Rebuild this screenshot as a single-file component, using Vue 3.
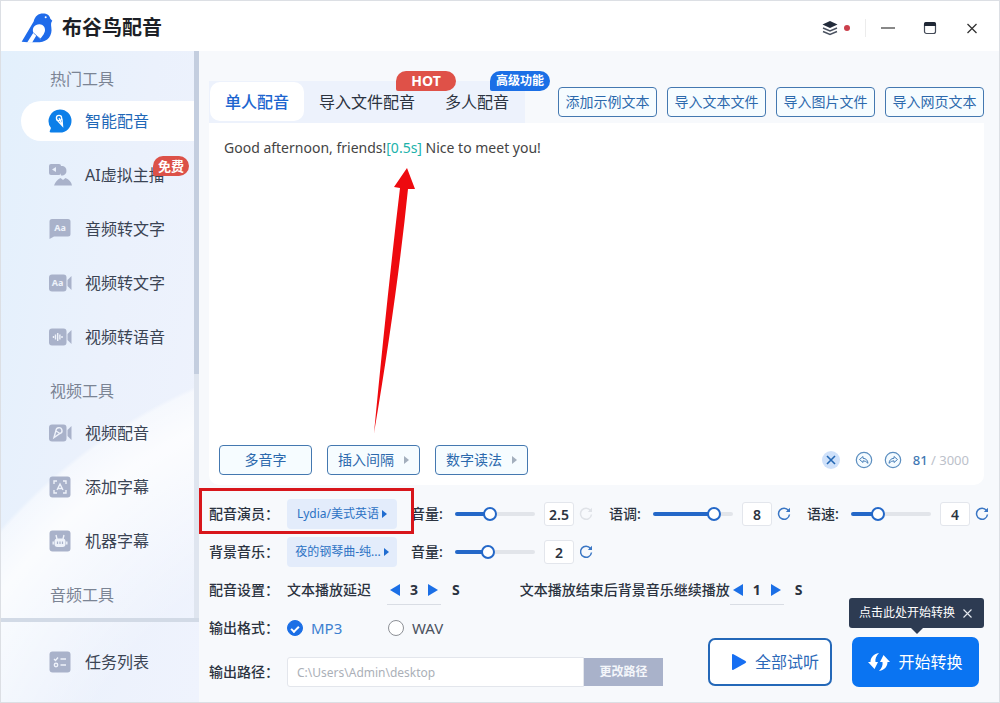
<template>
  <div class="app-window">
    <header class="title-bar">
      <div class="brand">
        <svg class="brand-logo" viewBox="0 0 96 92" aria-hidden="true">
          <path
            d="M2 89 L38 28 C42 12 52 4 66 4 C78 4 86 9 88 20 L94 26 C89 32 90 38 91 46 C95 70 80 89 56 90 L20 90 Z"
            fill="#1f6bea"
          />
          <path d="M18 92 L37 62 C32 47 41 36 55 36 C69 36 76 50 70 62 C67 69 63 74 58 79 L46 70 L33 92 Z" fill="#fff" />
          <path d="M37 62 L60 82" stroke="#5b93ee" stroke-width="3" />
          <circle cx="74" cy="15" r="3" fill="#fff" />
        </svg>
        <h1 class="brand-name">布谷鸟配音</h1>
      </div>
      <div class="window-tools">
        <button class="tool-button skin" aria-label="皮肤">
          <svg width="16" height="16" viewBox="0 0 16 16">
            <path d="M8 1 L15.5 4.5 L8 8 L0.5 4.5 Z" fill="#222b3a" />
            <path d="M1 8 L8 11 L15 8 M1 11.5 L8 14.5 L15 11.5" fill="none" stroke="#4a5260" stroke-width="1.4" />
          </svg>
          <span class="skin-dot"></span>
        </button>
        <span class="divider"></span>
        <button class="tool-button" aria-label="最小化">
          <svg width="14" height="14" viewBox="0 0 14 14">
            <path d="M0 7 H14" stroke="#555" stroke-width="1.4" />
          </svg>
        </button>
        <button class="tool-button" aria-label="最大化">
          <svg width="14" height="14" viewBox="0 0 14 14">
            <rect x="1.5" y="1.5" width="11" height="11" rx="2" fill="none" stroke="#444b58" stroke-width="1.2" />
            <path d="M1 5 V3 Q1 1 3 1 H11 Q13 1 13 3 V5 Z" fill="#1f2735" />
          </svg>
        </button>
        <button class="tool-button" aria-label="关闭">
          <svg width="14" height="14" viewBox="0 0 14 14">
            <path d="M2.5 3 L11.5 12 M11.5 3 L2.5 12" stroke="#333" stroke-width="1.3" />
          </svg>
        </button>
      </div>
    </header>

    <div class="body">
      <aside class="sidebar">
        <div class="sidebar-scroll">
          <nav class="menu">
            <section v-for="group in menuGroups" :key="group.title" class="menu-group">
              <h2 class="menu-title">{{ group.title }}</h2>
              <a
                v-for="item in group.items"
                :key="item.name"
                href="#"
                :class="['menu-item', { active: item.name === activeMenu }]"
                @click.prevent="activeMenu = item.name"
              >
                <svg class="menu-icon" viewBox="0 0 24 24" aria-hidden="true">
                  <template v-if="item.icon === 'mic'">
                    <path d="M12 0.5 A11.5 11.5 0 1 1 12 23.5 H3 Q1 23.5 2 21.5 L3 19 A11.5 11.5 0 0 1 12 0.5 Z" fill="#0c7fe9" />
                    <circle cx="11" cy="9" r="2.6" fill="none" stroke="#fff" stroke-width="1.3" />
                    <path d="M8.8 10.8 L14.6 17 L14 9.6 M11 9 L14.6 17" fill="none" stroke="#fff" stroke-width="1.2" />
                  </template>
                  <template v-else-if="item.icon === 'anchor'">
                    <rect x="1" y="1" width="12" height="11" rx="2" />
                    <path d="M13 3 H15 A5 5 0 0 1 15 12.5 H13 Z" />
                    <path d="M6 22.5 Q8 17 12.5 15 L15 17 L17.5 15 Q23 17 24 22.5 Z" />
                    <path d="M4 6.5 L8 4 V9 Z" fill="#e8effa" />
                  </template>
                  <template v-else-if="item.icon === 'audio-text'">
                    <path d="M4 2 H20 Q22.5 2 22.5 4.5 V17 Q22.5 19.5 20 19.5 H6 L1.5 22 V4.5 Q1.5 2 4 2 Z" />
                    <text x="12" y="13.5" class="icon-text">Aa</text>
                  </template>
                  <template v-else-if="item.icon.startsWith('video')">
                    <rect x="1" y="3.5" width="17.5" height="17" rx="3" />
                    <path d="M19.5 9 L23.5 5 V19 L19.5 15 Z" />
                    <text v-if="item.icon === 'video-text'" x="9.5" y="15" class="icon-text">Aa</text>
                    <path
                      v-else-if="item.icon === 'video-wave'"
                      d="M5.5 11 V13 M7.5 9.5 V14.5 M9.7 8 V16 M11.9 9.5 V14.5 M14 11 V13"
                      class="icon-line"
                    />
                    <path v-else d="M6 16.5 L8 9.5 A3 3 0 1 1 12 12.5 Z M8 10 L12 12.5" class="icon-line" />
                  </template>
                  <template v-else>
                    <rect x="1.5" y="1.5" width="21" height="21" rx="3" />
                    <path
                      v-if="item.icon === 'caption'"
                      d="M6 9 V6 H9 M15 6 H18 V9 M18 15 V18 H15 M9 18 H6 V15 M9 15 L12 9 L15 15 M10 13.5 H14"
                      class="icon-line"
                    />
                    <template v-else>
                      <rect x="6.5" y="9.500" width="11" height="8.500" rx="3" fill="#eef2fa" />
                      <path d="M9 10 L8 6 M15 10 L16 6 M5.2 12.500 V15.500 M18.800 12.500 V15.500" class="icon-line" />
                      <path d="M9.5 12.500 V15 M12 12.500 V15 M14.5 12.500 V15" stroke="#a9b2ca" stroke-width="1.2" />
                    </template>
                  </template>
                </svg>
                <span>{{ item.name }}</span>
                <span v-if="item.badge" class="free-badge">{{ item.badge }}</span>
              </a>
            </section>
          </nav>
          <div class="scroll-track"><div class="scroll-thumb"></div></div>
        </div>
        <div class="sidebar-footer">
          <a href="#" class="menu-item">
            <svg class="menu-icon" viewBox="0 0 24 24" aria-hidden="true">
              <rect x="1.5" y="1.5" width="21" height="21" rx="3" />
              <path d="M6 9 L7.5 10.5 L10 7.5 M12.5 9 H18 M12.5 15 H18" class="icon-line" />
              <circle cx="8" cy="15" r="1.7" class="icon-line" />
            </svg>
            <span>任务列表</span>
          </a>
        </div>
      </aside>

      <main class="main">
        <div class="top-row">
          <div class="tabs" role="tablist">
            <button
              v-for="tab in tabs"
              :key="tab.name"
              role="tab"
              :class="['tab', { active: tab.name === activeTab }]"
              @click="activeTab = tab.name"
            >
              {{ tab.name }}
              <span v-if="tab.badge" :class="['tab-badge', tab.badgeType]">{{ tab.badge }}</span>
            </button>
          </div>
          <div class="import-buttons">
            <button v-for="name in importActions" :key="name" class="outline-button import-button">{{ name }}</button>
          </div>
        </div>

        <section class="editor">
          <div class="editor-text" contenteditable="true" role="textbox" aria-label="配音文本">Good afternoon, friends!<span class="pause">[0.5s]</span> Nice to meet you!</div>
          <svg class="pointer-arrow" viewBox="0 0 40 270" aria-hidden="true">
            <path d="M34 1 L42 22 L35 22 Q24 130 1 266 Q14 130 27 21 L21 20 Z" fill="#ee0a0f" />
          </svg>
          <div class="editor-footer">
            <button class="outline-button word-button">多音字</button>
            <button class="outline-button word-button">插入间隔<i class="mini-arrow"></i></button>
            <button class="outline-button word-button">数字读法<i class="mini-arrow"></i></button>
            <div class="editor-tools">
              <button class="round-button" aria-label="清空">
                <svg width="18" height="18" viewBox="0 0 18 18">
                  <circle cx="9" cy="9" r="9" fill="#cfe1fa" />
                  <path d="M5 5 L13 13 M13 5 L5 13" stroke="#2468b4" stroke-width="1.6" />
                </svg>
              </button>
              <button class="round-button undo" aria-label="撤销">
                <svg width="18" height="18" viewBox="0 0 18 18">
                  <circle cx="9" cy="9" r="7.7" fill="#f4fbff" stroke="#5d8fc0" stroke-width="1.2" />
                  <path d="M4.5 8.5 L8 5.5 V7.3 Q12.5 7.5 13 12.3 Q11 9.8 8 9.8 V11.5 Z" fill="none" stroke="#4a80b8" />
                </svg>
              </button>
              <button class="round-button" aria-label="重做">
                <svg width="18" height="18" viewBox="0 0 18 18">
                  <circle cx="9" cy="9" r="7.7" fill="#f4fbff" stroke="#5d8fc0" stroke-width="1.2" />
                  <path d="M13.5 8.5 L10 5.5 V7.3 Q5.5 7.5 5 12.3 Q7 9.8 10 9.8 V11.5 Z" fill="none" stroke="#4a80b8" />
                </svg>
              </button>
              <span class="counter"><b>81</b> / 3000</span>
            </div>
          </div>
        </section>

        <section class="settings">
          <div v-for="row in voiceRows" :key="row.label" class="setting-row">
            <div :class="['voice-field', { marked: row.marked }]">
              <span class="row-label">{{ row.label }}</span>
              <button class="voice-select">{{ row.value }}<i class="select-arrow"></i></button>
            </div>
            <div class="sliders">
              <div v-for="slider in row.sliders" :key="slider.id" class="slider-group">
                <label :for="slider.id" class="slider-label">{{ slider.label }}</label>
                <input
                  :id="slider.id"
                  v-model.number="slider.percent"
                  type="range"
                  min="0"
                  max="100"
                  class="slider"
                  :style="{ '--fill': slider.percent + '%' }"
                />
                <input class="slider-value" type="text" :value="slider.value" :aria-label="slider.label + '数值'" />
                <button :class="['reset-button', { muted: slider.muted }]" aria-label="重置">
                  <svg width="14" height="14" viewBox="0 0 14 14">
                    <path d="M11.5 3.5 A5.5 5.5 0 1 0 12.5 7.5" fill="none" stroke="currentColor" stroke-width="1.5" />
                    <path d="M13 0.8 V5 H8.8 Z" fill="currentColor" />
                  </svg>
                </button>
              </div>
            </div>
          </div>

          <div class="setting-row">
            <span class="row-label">配音设置：</span>
            <div class="delay-list">
              <div v-for="delay in delays" :key="delay.label" class="delay">
                <span>{{ delay.label }}</span>
                <div :class="['stepper', { spaced: delay.spaced }]">
                  <button class="step prev" aria-label="减少" @click="delay.value--"></button>
                  <b>{{ delay.value }}</b>
                  <button class="step next" aria-label="增加" @click="delay.value++"></button>
                </div>
                <b class="unit">S</b>
              </div>
            </div>
          </div>

          <div class="output">
            <div class="output-fields">
              <div class="setting-row">
                <span class="row-label">输出格式：</span>
                <label v-for="item in formats" :key="item" class="format">
                  <input v-model="format" type="radio" name="format" :value="item" />
                  <span>{{ item }}</span>
                </label>
              </div>
              <div class="setting-row">
                <label for="path" class="row-label">输出路径：</label>
                <input id="path" class="path-input" type="text" value="C:\Users\Admin\desktop" />
                <button class="path-button">更改路径</button>
              </div>
            </div>
            <div class="actions">
              <button class="action-button listen-button">
                <svg width="16" height="18" viewBox="0 0 16 18">
                  <path d="M1 2 Q1 0.5 2.5 1.3 L14.5 8 Q16 9 14.5 10 L2.5 16.7 Q1 17.5 1 16 Z" fill="#176ff2" />
                </svg>
                全部试听
              </button>
              <div class="convert">
                <div v-if="showTip" class="tip">
                  点击此处开始转换
                  <button class="tip-close" aria-label="关闭提示" @click="showTip = false">
                    <svg width="9" height="9" viewBox="0 0 9 9">
                      <path d="M0.5 0.5 L8.5 8.5 M8.5 0.5 L0.5 8.5" stroke="#e5e9f0" stroke-width="1.1" />
                    </svg>
                  </button>
                </div>
                <button class="action-button convert-button">
                  <svg width="22" height="20" viewBox="0 0 22 20">
                    <path d="M11 1 C5 2 2.5 6 2.5 10 H0 L6.500 17 L10 10 H7.500 C7 7 8 4 11 1 Z" fill="#fff" />
                    <path d="M11 19 C17 18 19.5 14 19.5 10 H22 L15.500 3 L12 10 H14.5 C15 13 14 16 11 19 Z" fill="#fff" />
                  </svg>
                  开始转换
                </button>
              </div>
            </div>
          </div>
        </section>
      </main>
    </div>
  </div>
</template>

<script setup>
import { ref } from 'vue'

const activeMenu = ref('智能配音')
const activeTab = ref('单人配音')
const format = ref('MP3')
const showTip = ref(true)

const menuGroups = [
  {
    title: '热门工具',
    items: [
      { name: '智能配音', icon: 'mic' },
      { name: 'AI虚拟主播', icon: 'anchor', badge: '免费' },
      { name: '音频转文字', icon: 'audio-text' },
      { name: '视频转文字', icon: 'video-text' },
      { name: '视频转语音', icon: 'video-wave' }
    ]
  },
  {
    title: '视频工具',
    items: [
      { name: '视频配音', icon: 'video-mic' },
      { name: '添加字幕', icon: 'caption' },
      { name: '机器字幕', icon: 'robot' }
    ]
  },
  { title: '音频工具', items: [] }
]

const tabs = [
  { name: '单人配音' },
  { name: '导入文件配音', badge: 'HOT', badgeType: 'hot' },
  { name: '多人配音', badge: '高级功能', badgeType: 'pro' }
]

const importActions = ['添加示例文本', '导入文本文件', '导入图片文件', '导入网页文本']

const voiceRows = ref([
  {
    label: '配音演员：',
    value: 'Lydia/美式英语',
    marked: true,
    sliders: [
      { id: 'voice-volume', label: '音量:', percent: 42, value: '2.5', muted: true },
      { id: 'voice-pitch', label: '语调:', percent: 82, value: '8' },
      { id: 'voice-speed', label: '语速:', percent: 30, value: '4' }
    ]
  },
  {
    label: '背景音乐：',
    value: '夜的钢琴曲-纯...',
    sliders: [{ id: 'music-volume', label: '音量:', percent: 39, value: '2' }]
  }
])

const delays = ref([
  { label: '文本播放延迟', value: 3, spaced: true },
  { label: '文本播放结束后背景音乐继续播放', value: 1 }
])

const formats = ['MP3', 'WAV']
</script>

<style>
body {
  margin: 0;
}
</style>

<style scoped>
.app-window {
  display: flex;
  flex-direction: column;
  box-sizing: border-box;
  min-height: 100vh;
  border: 1px solid #dcdfe4;
  background: #f7f9fc;
  color: #2b3340;
  font-family: 'Noto Sans', 'Noto Sans CJK SC', sans-serif;
  font-size: 14px;
  line-height: 20px;
}

button,
input {
  box-sizing: border-box;
  margin: 0;
  padding: 0;
  border: none;
  background: none;
  color: inherit;
  font: inherit;
}

button {
  cursor: pointer;
  white-space: nowrap;
}

svg {
  display: block;
  flex-shrink: 0;
}

/* title bar */
.title-bar {
  display: flex;
  align-items: center;
  justify-content: space-between;
  box-sizing: border-box;
  height: 50px;
  padding: 3px 20px 0;
  background: #fff;
}

.brand {
  display: flex;
  align-items: center;
  gap: 9px;
}

.brand-logo {
  width: 32px;
  height: 31px;
}

.brand-name {
  margin: 0;
  color: #1c1f26;
  font-size: 20px;
  font-weight: 700;
}

.window-tools {
  display: flex;
  align-items: center;
  gap: 28px;
}

.tool-button {
  display: flex;
  align-items: center;
}

.skin {
  gap: 6px;
}

.skin-dot {
  width: 6px;
  height: 6px;
  border-radius: 50%;
  background: #cb3f4b;
}

.divider {
  width: 1px;
  height: 18px;
  margin: 0 -13px;
  background: #ececec;
}

/* sidebar */
.body {
  display: flex;
  flex: 1;
}

.sidebar {
  display: flex;
  flex-direction: column;
  flex: 0 0 198px;
  background:
    radial-gradient(
      circle at 420px 850px,
      transparent 380px,
      rgba(255, 255, 255, 0.8) 520px,
      rgba(255, 255, 255, 0.5) 558px,
      transparent 562px
    ),
    linear-gradient(100deg, #e3f0fc 0%, #ebf1fc 50%, #eff3fd 100%);
}

.sidebar-scroll {
  display: flex;
  flex: 1;
  border-bottom: 4px solid #d2dae6;
}

.menu {
  flex: 1;
  padding-left: 20px;
}

.menu-group {
  padding-bottom: 24px;
}

.menu-group:first-child {
  padding-top: 18px;
}

.menu-group:last-child {
  padding-bottom: 0;
}

.menu-title {
  margin: 0 0 12px 29px;
  color: #7b8494;
  font-size: 16px;
  font-weight: 400;
}

.menu-item {
  position: relative;
  display: flex;
  align-items: center;
  gap: 13px;
  height: 40px;
  padding-left: 27px;
  border-radius: 20px 0 0 20px;
  color: #3b4454;
  font-size: 16px;
  text-decoration: none;
}

.menu-item + .menu-item {
  margin-top: 14px;
}

.menu-item.active {
  background: #fff;
  color: #1f68b8;
}

.menu-icon {
  width: 24px;
  height: 24px;
  fill: #a9b2ca;
}

.icon-text {
  fill: #eef2fa;
  font-size: 9px;
  font-weight: 700;
  text-anchor: middle;
}

.icon-line {
  fill: none;
  stroke: #eef2fa;
  stroke-width: 1.4px;
}

.free-badge {
  position: absolute;
  top: 1px;
  right: 5px;
  padding: 0 5px;
  border-radius: 10px 10px 10px 2px;
  background: #dc5148;
  color: #fff;
  font-size: 13px;
  font-weight: 700;
}

.scroll-track {
  width: 5px;
  background: #dfe5ef;
}

.scroll-thumb {
  height: 57%;
  background: #c4cedf;
}

.sidebar-footer {
  display: flex;
  align-items: center;
  height: 80px;
  padding-left: 20px;
}

/* tabs */
.main {
  display: flex;
  flex: 1;
  flex-direction: column;
  min-width: 0;
  padding: 30px 15px 15px 10px;
}

.top-row {
  display: flex;
  align-items: flex-start;
  justify-content: space-between;
}

.tabs {
  display: flex;
  box-sizing: border-box;
  height: 42px;
  padding: 1px 1px 2px;
  background: #edf2fc;
}

.tab {
  position: relative;
  padding: 0 15px;
  border-radius: 10px;
  font-size: 16px;
}

.tab.active {
  background: #fff;
  color: #1d65cf;
  font-weight: 500;
}

.tab-badge {
  position: absolute;
  top: -11px;
  right: -26px;
  box-sizing: border-box;
  width: 60px;
  border-radius: 10px 10px 10px 2px;
  color: #fff;
  font-weight: 700;
  text-align: center;
}

.tab-badge.hot {
  background: #df5148;
  font-size: 14px;
}

.tab-badge.pro {
  background: #1b6fe6;
  font-size: 12px;
}

.import-buttons {
  display: flex;
  gap: 10px;
  padding-top: 6px;
}

.outline-button {
  height: 30px;
  border: 1px solid #4478b0;
  border-radius: 4px;
  background: #f6fcff;
  color: #2c69ad;
}

.import-button {
  width: 99px;
}

/* editor */
.editor {
  position: relative;
  display: flex;
  flex: 1;
  flex-direction: column;
  border-radius: 0 0 10px 10px;
  background: #fff;
}

.editor-text {
  flex: 1;
  padding: 15px 15px 0;
  color: #444;
  font-size: 14px;
  outline: none;
}

.pause {
  color: #20b2aa;
}

.pointer-arrow {
  position: absolute;
  top: 44px;
  left: 164px;
  width: 40px;
  height: 270px;
  overflow: visible;
  pointer-events: none;
}

.editor-footer {
  display: flex;
  align-items: center;
  gap: 15px;
  padding: 10px 15px 10px 10px;
}

.word-button {
  display: flex;
  align-items: center;
  justify-content: center;
  gap: 10px;
  width: 93px;
}

.mini-arrow {
  border: 4px solid transparent;
  border-right: none;
  border-left: 5px solid #a3afbd;
}

.editor-tools {
  display: flex;
  align-items: center;
  gap: 11px;
  margin-left: auto;
}

.undo {
  margin-left: 4px;
}

.counter {
  color: #bcc1ca;
  font-size: 13px;
}

.counter b {
  color: #4177b3;
  font-weight: 500;
}

/* settings */
.settings {
  display: flex;
  flex-direction: column;
  gap: 8px;
  margin-right: -10px;
  padding-top: 14px;
}

.setting-row {
  display: flex;
  align-items: center;
  height: 30px;
}

.row-label {
  flex-shrink: 0;
  width: 78px;
  font-weight: 500;
}

.voice-field {
  position: relative;
  display: flex;
  align-items: center;
}

.voice-field.marked::after {
  content: '';
  position: absolute;
  inset: -11px -17px -5px -10px;
  border: 3px solid #d8161b;
  pointer-events: none;
}

.voice-select {
  display: flex;
  align-items: center;
  justify-content: center;
  gap: 3px;
  width: 110px;
  height: 30px;
  border-radius: 4px;
  background: #e3ecfb;
  color: #2c72c4;
  font-size: 12px;
}

.select-arrow {
  border: 4px solid transparent;
  border-right: none;
  border-left: 5px solid #1f6cd0;
}

.sliders {
  display: flex;
  gap: 16px;
  margin-left: 14px;
}

.slider-group {
  display: flex;
  align-items: center;
}

.slider-label {
  width: 44px;
  font-weight: 500;
}

.slider {
  width: 80px;
  height: 14px;
  margin-right: 9px;
  appearance: none;
}

.slider::-webkit-slider-runnable-track {
  height: 4px;
  border-radius: 2px;
  background: linear-gradient(to right, #2468c8 var(--fill), #e2e5ea var(--fill));
}

.slider::-webkit-slider-thumb {
  box-sizing: border-box;
  width: 14px;
  height: 14px;
  margin-top: -5px;
  border: 2px solid #2468c8;
  border-radius: 50%;
  background: #fff;
  appearance: none;
}

.slider-value {
  width: 30px;
  height: 24px;
  border: 1px solid #e3e6ec;
  border-radius: 3px;
  background: #fff;
  font-weight: 600;
  text-align: center;
}

.reset-button {
  margin-left: 5px;
  color: #3a76c4;
}

.reset-button.muted {
  color: #dfe2e7;
}

.delay-list {
  display: flex;
  gap: 60px;
}

.delay {
  display: flex;
  align-items: center;
  font-weight: 500;
  white-space: nowrap;
}

.stepper {
  display: flex;
  align-items: center;
  justify-content: space-between;
  box-sizing: border-box;
  width: 54px;
  height: 29px;
  padding: 0 3px;
  border-bottom: 1px solid #d9dde4;
}

.stepper.spaced {
  margin-left: 16px;
}

.step {
  border: 6px solid transparent;
}

.step.prev {
  border-right: 10px solid #1b6fe6;
  border-left: none;
}

.step.next {
  border-right: none;
  border-left: 10px solid #1b6fe6;
}

.unit {
  margin-left: 11px;
}

.format {
  display: flex;
  align-items: center;
  gap: 8px;
  width: 101px;
  color: #4b5260;
  font-size: 15px;
}

.format input {
  width: 16px;
  height: 16px;
  border: 1px solid #8d9096;
  border-radius: 50%;
  background: #fff;
  appearance: none;
}

.format input:checked {
  display: grid;
  place-items: center;
  border-color: #1b6fe6;
  background: #1b6fe6;
}

.format input:checked::after {
  content: '';
  width: 6px;
  height: 3px;
  border: solid #fff;
  border-width: 0 0 2px 2px;
  transform: rotate(-45deg);
}

.format input:checked + span {
  color: #3c80d0;
}

.output {
  display: flex;
  align-items: flex-end;
  justify-content: space-between;
}

.output-fields {
  display: flex;
  flex: 1;
  flex-direction: column;
  gap: 14px;
  max-width: 454px;
}

.path-input {
  flex: 1;
  min-width: 0;
  height: 30px;
  padding: 0 9px;
  border: 1px solid #e3e6ec;
  border-radius: 3px 0 0 3px;
  background: #fff;
  color: #abb0b8;
  font-size: 12px;
}

.path-button {
  width: 79px;
  height: 28px;
  background: #a9b2ca;
  color: #f4f6fa;
  font-size: 12px;
  font-weight: 600;
}

.actions {
  display: flex;
  align-items: center;
  gap: 20px;
  padding-right: 15px;
}

.action-button {
  display: flex;
  align-items: center;
  justify-content: center;
  gap: 8px;
  border-radius: 7px;
  font-size: 16px;
}

.listen-button {
  width: 124px;
  height: 48px;
  padding-left: 10px;
  border: 2px solid #2468b8;
  background: #fff;
  color: #2c69b8;
}

.convert-button {
  width: 127px;
  height: 50px;
  background: #0a74f2;
  color: #fff;
}

.convert {
  position: relative;
}

.tip {
  position: absolute;
  right: -5px;
  bottom: 59px;
  display: flex;
  align-items: center;
  justify-content: space-between;
  box-sizing: border-box;
  width: 135px;
  height: 30px;
  padding: 0 12px 0 10px;
  border-radius: 3px;
  background: #2d3b52;
  color: #fff;
  font-size: 12px;
  white-space: nowrap;
}

.tip::after {
  content: '';
  position: absolute;
  top: 30px;
  left: 62px;
  border: 6px solid transparent;
  border-top-color: #2d3b52;
  border-bottom: none;
}
</style>
